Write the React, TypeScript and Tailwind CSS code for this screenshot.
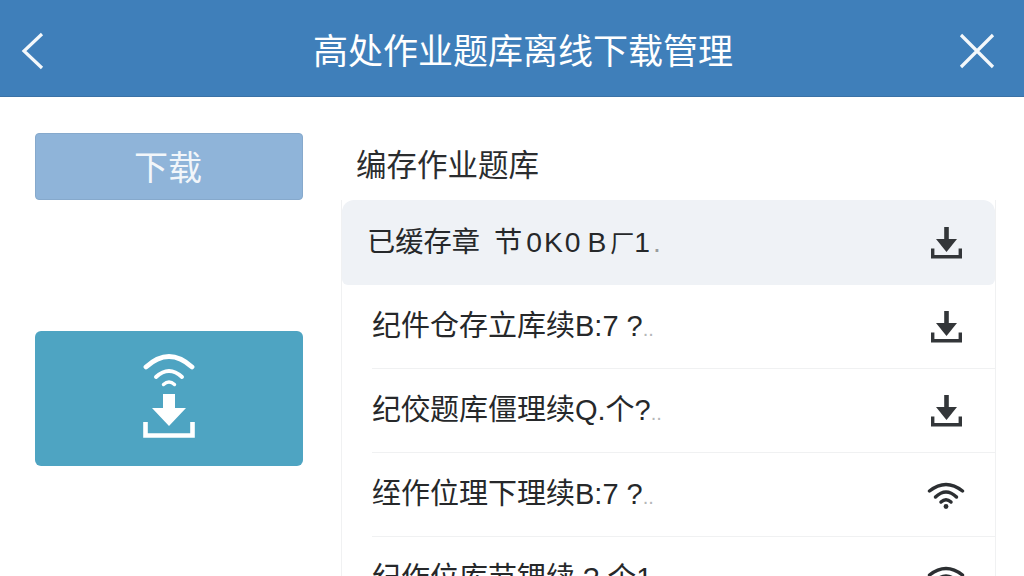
const cjk = "font-['Liberation_Sans','Noto_Sans_CJK_SC',sans-serif]";

type RowIcon = 'download' | 'wifi';

interface CacheRow {
  id: number;
  label: string;
  faded?: string;
  icon: RowIcon;
}

const rows: CacheRow[] = [
  { id: 1, label: '纪件仓存立库续B:7 ?', faded: '..', icon: 'download' },
  { id: 2, label: '纪佼题库僵理续Q.个?', faded: '..', icon: 'download' },
  { id: 3, label: '绖作位理下理续B:7 ?', faded: '..', icon: 'wifi' },
  { id: 4, label: '纪作位库节锶续 ? 个1', icon: 'wifi' },
];

function DownloadIcon() {
  return (
    <svg width="31" height="32" viewBox="0 0 31 32" fill="none" className="text-[#333639]">
      <path d="M15.5 0v14" stroke="currentColor" strokeWidth="4.6" />
      <path d="M5 12h21L15.5 25z" fill="currentColor" />
      <path d="M1.7 21.5v8.3h27.6v-8.3" stroke="currentColor" strokeWidth="3.4" />
    </svg>
  );
}

function WifiIcon() {
  return (
    <svg width="38" height="28" viewBox="0 0 38 28" fill="none" stroke="#2c2f32" strokeWidth="3.5" strokeLinecap="round">
      <path d="M2.5 10Q19-3 35.5 10" />
      <path d="M8.5 16Q19 6 29.5 16" />
      <path d="M14 21Q19 16.5 24 21" />
      <circle cx="19" cy="25.5" r="2.4" fill="#2c2f32" stroke="none" />
    </svg>
  );
}

function OfflineDownloadIcon() {
  return (
    <svg width="54" height="88" viewBox="0 0 54 88" fill="none" stroke="white" strokeLinecap="round">
      <path d="M4 15Q27-6 50 15" strokeWidth="4.8" />
      <path d="M14 25Q27 13 40 25" strokeWidth="4" />
      <path d="M21.5 32.5Q27 27.5 32.5 32.5" strokeWidth="3.4" />
      <path d="M21 42h12v14h11L27 74 10 56h11z" fill="white" stroke="none" />
      <path d="M3.5 70v13.5h47V70" strokeWidth="4.6" strokeLinecap="butt" />
    </svg>
  );
}

export default function App() {
  return (
    <div className={`${cjk} h-[576px] w-[1024px] overflow-hidden bg-white`}>
      <header className="flex h-[97px] items-center justify-between border-b border-[#3b72a6] bg-[#3f7fba] pt-[6px] pl-[20px] pr-[28px] text-white">
        <svg width="26" height="40" viewBox="0 0 26 40" fill="none" stroke="#f4f8fb" strokeWidth="3.2">
          <path d="M22 3 4 20l18 17" />
        </svg>
        <h1 className="ml-[42px] text-[35px] leading-none font-normal">高处作业题库离线下载管理</h1>
        <svg width="38" height="38" viewBox="0 0 38 38" fill="none" stroke="#f4f8fb" strokeWidth="3.2">
          <path d="M3 3l32 32M35 3 3 35" />
        </svg>
      </header>

      <main className="flex pl-[35px]">
        <aside className="flex w-[268px] flex-col pt-[36px]">
          <button className="flex h-[67px] items-center justify-center rounded border border-[#86a9cc] bg-[#8fb4d9] pt-[3px] pr-[2px] text-[34px] leading-none text-[#f2f6fa]">
            下载
          </button>
          <button className="mt-[131px] flex h-[135px] items-center justify-center rounded-md bg-[#4ea4c2] pb-[5px]">
            <OfflineDownloadIcon />
          </button>
        </aside>

        <section className="ml-[38px] flex w-[655px] flex-col">
          <h2 className="flex h-[103px] items-end pl-[15px] pb-[20px] text-[30.5px] leading-none font-normal text-[#2b2d2f]">
            编存作业题库
          </h2>
          <div className="flex flex-col border-x border-[#f0f1f2]">
            <div className="flex h-[85px] items-center justify-between rounded-t-xl rounded-b-md bg-[#eff2f6] pl-[25px] pr-[30px] text-[#26282a]">
              <span className="flex items-baseline text-[28.25px] leading-none">
                已缓存章
                <span className="ml-[14px]">节</span>
                <span className="ml-[4px] tracking-[2px]">0K0</span>
                <span className="ml-[5px]">B</span>
                <span className="ml-[4px] text-[24px]">厂</span>
                1<span className="ml-[3px] text-[#9a9c9e]">.</span>
              </span>
              <span className="flex w-[38px] justify-center">
                <DownloadIcon />
              </span>
            </div>
            {rows.map((row) => (
              <div key={row.id} className="flex h-[84px] items-center pl-[30px]">
                <div className="flex h-full flex-1 items-center justify-between border-b border-[#f0f1f2] pr-[30px] text-[#26282a]">
                  <span className="text-[29px] leading-none">
                    {row.label}
                    {row.faded && <span className="text-[20px] text-[#b5b7b9]">{row.faded}</span>}
                  </span>
                  <span className="flex w-[38px] justify-center">
                    {row.icon === 'download' ? <DownloadIcon /> : <WifiIcon />}
                  </span>
                </div>
              </div>
            ))}
          </div>
        </section>
      </main>
    </div>
  );
}
